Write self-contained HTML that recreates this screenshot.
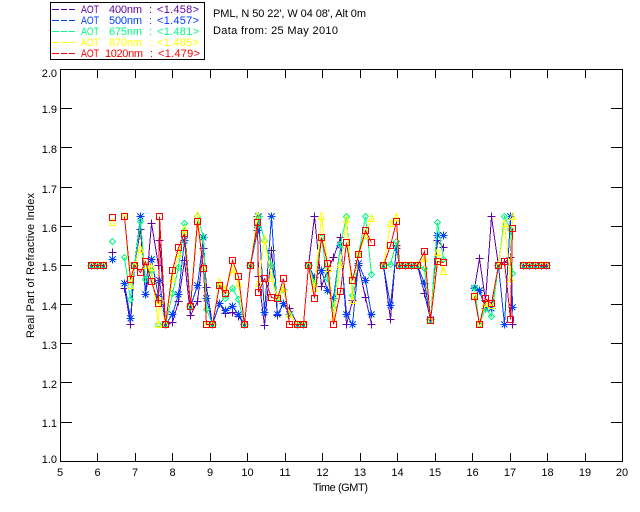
<!DOCTYPE html>
<html><head><meta charset="utf-8"><style>
html,body{margin:0;padding:0;background:#fff;width:640px;height:512px;overflow:hidden}
svg{display:block}
text{font-family:"Liberation Sans",sans-serif;font-size:11px;fill:#000}
.p{fill:none;stroke-width:1;shape-rendering:crispEdges}
.m{fill:none;stroke-width:1;shape-rendering:crispEdges}
</style></head><body>
<svg width="640" height="512" viewBox="0 0 640 512" xmlns="http://www.w3.org/2000/svg">
<defs>
<marker id="mp" markerUnits="userSpaceOnUse" markerWidth="11" markerHeight="11" refX="5.5" refY="5.5" viewBox="0 0 11 11"><path class="m" stroke="#5f00a8" d="M5.5 1.5V9.5M1.5 5.5H9.5"/></marker>
<marker id="mb" markerUnits="userSpaceOnUse" markerWidth="11" markerHeight="11" refX="5.5" refY="5.5" viewBox="0 0 11 11"><path class="m" stroke="#0040ff" d="M5.5 1.5V9.5M2.5 2.5L8.5 8.5M8.5 2.5L2.5 8.5M1.5 5.5H9.5"/></marker>
<marker id="mg" markerUnits="userSpaceOnUse" markerWidth="11" markerHeight="11" refX="5.5" refY="5.5" viewBox="0 0 11 11"><path class="m" stroke="#00ff80" d="M5.5 2.5L8.5 5.5L5.5 8.5L2.5 5.5Z"/></marker>
<marker id="my" markerUnits="userSpaceOnUse" markerWidth="11" markerHeight="11" refX="5.5" refY="5.5" viewBox="0 0 11 11"><path class="m" stroke="#ffff00" d="M5.5 1.5L8.5 8.5H2.5Z"/></marker>
<marker id="mr" markerUnits="userSpaceOnUse" markerWidth="11" markerHeight="11" refX="5.5" refY="5.5" viewBox="0 0 11 11"><path class="m" stroke="#ff0000" d="M2.5 2.5H8.5V8.5H2.5Z"/></marker>
</defs>

<!-- legend -->
<rect x="50.5" y="2.5" width="154" height="57" fill="#fff" stroke="#000" shape-rendering="crispEdges"/>
<g shape-rendering="crispEdges" stroke-width="1" fill="none">
<path stroke="#5f00a8" d="M52 9.5h7M61 9.5h6M69 9.5h6"/>
<path stroke="#0040ff" d="M52 20.5h7M61 20.5h6M69 20.5h6"/>
<path stroke="#00ff80" d="M52 31.5h7M61 31.5h6M69 31.5h6"/>
<path stroke="#ffff00" d="M52 42.5h7M61 42.5h6M69 42.5h6"/>
<path stroke="#ff0000" d="M52 53.5h7M61 53.5h6M69 53.5h6"/>
</g>
<text x="81" y="13" textLength="18" lengthAdjust="spacingAndGlyphs" style="fill:#5f00a8">AOT</text><text x="109" y="13" textLength="33" style="fill:#5f00a8">400nm</text><text x="149" y="13" style="fill:#5f00a8">:</text><text x="157" y="13" textLength="42" style="fill:#5f00a8">&lt;1.458&gt;</text>
<text x="81" y="24" textLength="18" lengthAdjust="spacingAndGlyphs" style="fill:#0040ff">AOT</text><text x="109" y="24" textLength="33" style="fill:#0040ff">500nm</text><text x="149" y="24" style="fill:#0040ff">:</text><text x="157" y="24" textLength="42" style="fill:#0040ff">&lt;1.457&gt;</text>
<text x="81" y="35" textLength="18" lengthAdjust="spacingAndGlyphs" style="fill:#00ff80">AOT</text><text x="109" y="35" textLength="33" style="fill:#00ff80">675nm</text><text x="149" y="35" style="fill:#00ff80">:</text><text x="157" y="35" textLength="42" style="fill:#00ff80">&lt;1.481&gt;</text>
<text x="81" y="46" textLength="18" lengthAdjust="spacingAndGlyphs" style="fill:#ffff00">AOT</text><text x="109" y="46" textLength="33" style="fill:#ffff00">870nm</text><text x="149" y="46" style="fill:#ffff00">:</text><text x="157" y="46" textLength="42" style="fill:#ffff00">&lt;1.485&gt;</text>
<text x="81" y="57" textLength="18" lengthAdjust="spacingAndGlyphs" style="fill:#ff0000">AOT</text><text x="105" y="57" textLength="38" style="fill:#ff0000">1020nm</text><text x="150" y="57" style="fill:#ff0000">:</text><text x="158" y="57" textLength="42" style="fill:#ff0000">&lt;1.479&gt;</text>

<text x="213" y="17" textLength="153">PML, N 50 22', W 04 08', Alt 0m</text>
<text x="213" y="34" textLength="125">Data from: 25 May 2010</text>

<!-- axes -->
<g stroke="#000" stroke-width="1" fill="none" shape-rendering="crispEdges">
<rect x="60.5" y="69.5" width="562" height="392"/>
<path d="M97.5 461V453M135.5 461V453M172.5 461V453M210.5 461V453M247.5 461V453M285.5 461V453M322.5 461V453M360.5 461V453M397.5 461V453M435.5 461V453M472.5 461V453M510.5 461V453M547.5 461V453M585.5 461V453"/>
<path d="M97.5 70V78M135.5 70V78M172.5 70V78M210.5 70V78M247.5 70V78M285.5 70V78M322.5 70V78M360.5 70V78M397.5 70V78M435.5 70V78M472.5 70V78M510.5 70V78M547.5 70V78M585.5 70V78"/>
<path d="M61 108.5H72M61 147.5H72M61 187.5H72M61 226.5H72M61 265.5H72M61 304.5H72M61 343.5H72M61 382.5H72M61 422.5H72"/>
<path d="M622 108.5H611M622 147.5H611M622 187.5H611M622 226.5H611M622 265.5H611M622 304.5H611M622 343.5H611M622 382.5H611M622 422.5H611"/>
</g>
<g text-anchor="end">
<text x="57" y="77">2.0</text><text x="57" y="113">1.9</text><text x="57" y="153">1.8</text><text x="57" y="193">1.7</text><text x="57" y="232">1.6</text><text x="57" y="271">1.5</text><text x="57" y="310">1.4</text><text x="57" y="349">1.3</text><text x="57" y="388">1.2</text><text x="57" y="427">1.1</text><text x="57" y="463">1.0</text>
</g>
<g text-anchor="middle">
<text x="60" y="476">5</text><text x="97.5" y="476">6</text><text x="135" y="476">7</text><text x="172.5" y="476">8</text><text x="210" y="476">9</text><text x="247.5" y="476">10</text><text x="285" y="476">11</text><text x="322.5" y="476">12</text><text x="360" y="476">13</text><text x="397.5" y="476">14</text><text x="435" y="476">15</text><text x="472.5" y="476">16</text><text x="510" y="476">17</text><text x="547.5" y="476">18</text><text x="585" y="476">19</text><text x="622" y="476">20</text>
</g>
<text x="313" y="491" textLength="55">Time (GMT)</text>
<text transform="translate(34 338) rotate(-90)" textLength="145">Real Part of Refractive Index</text>

<g transform="translate(.5 .5)">
<!-- purple -->
<g class="p" stroke="#5f00a8" marker-start="url(#mp)" marker-mid="url(#mp)" marker-end="url(#mp)" style="fill:none">
<polyline points="91,265 97,265 103,265"/>
<polyline points="112,252 112,252"/>
<polyline points="124,288 130,324 134,265 140,229 145,294 151,223 158,265 159,240 165,324 172,322 178,301 184,260 190,315 197,301 203,248 206,287 212,324 219,303 225,313 232,312 238,316 244,324 250,265 257,216 258,276 264,325 271,250 277,315 283,303 289,308 297,324 303,324 308,265 314,216 321,286 327,270 333,257 340,237 346,324 352,300 358,265 365,297 371,324"/>
<polyline points="383,265 390,319 396,245 399,265 405,265 411,265 417,265 424,293 430,319 437,240 443,247"/>
<polyline points="474,288 479,258 485,300 491,216 498,265 504,262 510,257 512,324"/>
<polyline points="523,265 529,265 535,265 541,265 546,265"/>
</g>
<!-- blue -->
<g class="p" stroke="#0040ff" marker-start="url(#mb)" marker-mid="url(#mb)" marker-end="url(#mb)" style="fill:none">
<polyline points="91,265 97,265 103,265"/>
<polyline points="112,259 112,259"/>
<polyline points="124,283 130,318 134,265 140,216 145,294 151,259 158,296 159,280 165,324 172,314 178,294 184,240 190,306 197,285 203,237 206,298 212,324 219,303 225,310 232,306 238,314 244,324 250,265 257,230 258,216 264,312 271,216 277,314 283,303 289,314 297,324 303,324 308,265 314,277 321,270 327,290 333,298 340,245 346,314 352,324 358,263 365,280 371,314"/>
<polyline points="383,265 390,305 396,248 399,265 405,265 411,265 417,265 424,283 430,319 437,235 443,235"/>
<polyline points="474,288 479,290 485,308 491,308 498,265 504,324 510,216 512,307"/>
<polyline points="523,265 529,265 535,265 541,265 546,265"/>
</g>
<!-- green -->
<g class="p" stroke="#00ff80" marker-start="url(#mg)" marker-mid="url(#mg)" marker-end="url(#mg)" style="fill:none">
<polyline points="91,265 97,265 103,265"/>
<polyline points="112,241 112,241"/>
<polyline points="124,257 130,299 134,265 140,221 145,279 151,270 158,324 159,300 165,324 172,293 178,267 184,223 190,306 197,216 203,237 206,309 212,324 219,285 225,298 232,288 238,299 244,324 250,265 257,225 258,216 264,240 271,265 277,298 283,289 289,314 297,324 303,324 308,265 314,283 321,237 327,278 333,307 340,244 346,216 352,295 358,254 365,216 371,274"/>
<polyline points="383,265 390,264 396,241 399,265 405,265 411,265 417,265 424,268 430,320 437,222 443,259"/>
<polyline points="474,287 479,324 485,308 491,316 498,265 504,216 510,229 512,273"/>
<polyline points="523,265 529,265 535,265 541,265 546,265"/>
</g>
<!-- yellow -->
<g class="p" stroke="#ffff00" marker-start="url(#my)" marker-mid="url(#my)" marker-end="url(#my)" style="fill:none">
<polyline points="91,265 97,265 103,265"/>
<polyline points="112,222 112,222"/>
<polyline points="124,216 130,285 134,265 140,249 145,265 151,267 158,324 159,300 165,324 172,278 178,253 184,229 190,306 197,215 203,268 206,324 212,324 219,282 225,289 232,269 238,283 244,324 250,265 257,216 258,283 264,239 271,278 277,298 283,288 289,314 297,324 303,324 308,265 314,288 321,216 328,268 333,318 340,264 346,219 352,300 358,254 365,235 371,218"/>
<polyline points="383,265 390,223 396,217 399,265 405,265 411,265 417,265 424,258 430,320 437,252 443,271"/>
<polyline points="474,295 479,324 485,303 491,305 498,265 504,223 510,278 512,216"/>
<polyline points="523,265 529,265 535,265 541,265 546,265"/>
</g>
<!-- red -->
<g class="p" stroke="#ff0000" marker-start="url(#mr)" marker-mid="url(#mr)" marker-end="url(#mr)" style="fill:none">
<polyline points="91,265 97,265 103,265"/>
<polyline points="112,217 112,217"/>
<polyline points="124,216 130,279 134,265 140,272 145,261 151,281 158,303 159,216 165,324 172,270 178,247 184,233 190,306 197,221 203,268 206,324 212,324 219,285 225,293 232,260 238,276 244,324 250,265 257,222 258,292 264,278 271,297 277,298 283,278 289,324 297,324 303,324 308,265 314,298 321,237 327,263 333,324 340,291 346,242 352,280 358,254 365,230 371,242"/>
<polyline points="383,265 390,245 396,221 399,265 405,265 411,265 417,265 424,251 430,320 437,261 443,262"/>
<polyline points="474,296 479,324 485,298 491,303 498,265 504,261 510,319 512,228"/>
<polyline points="523,265 529,265 535,265 541,265 546,265"/>
</g>
</g>
</svg>
</body></html>
